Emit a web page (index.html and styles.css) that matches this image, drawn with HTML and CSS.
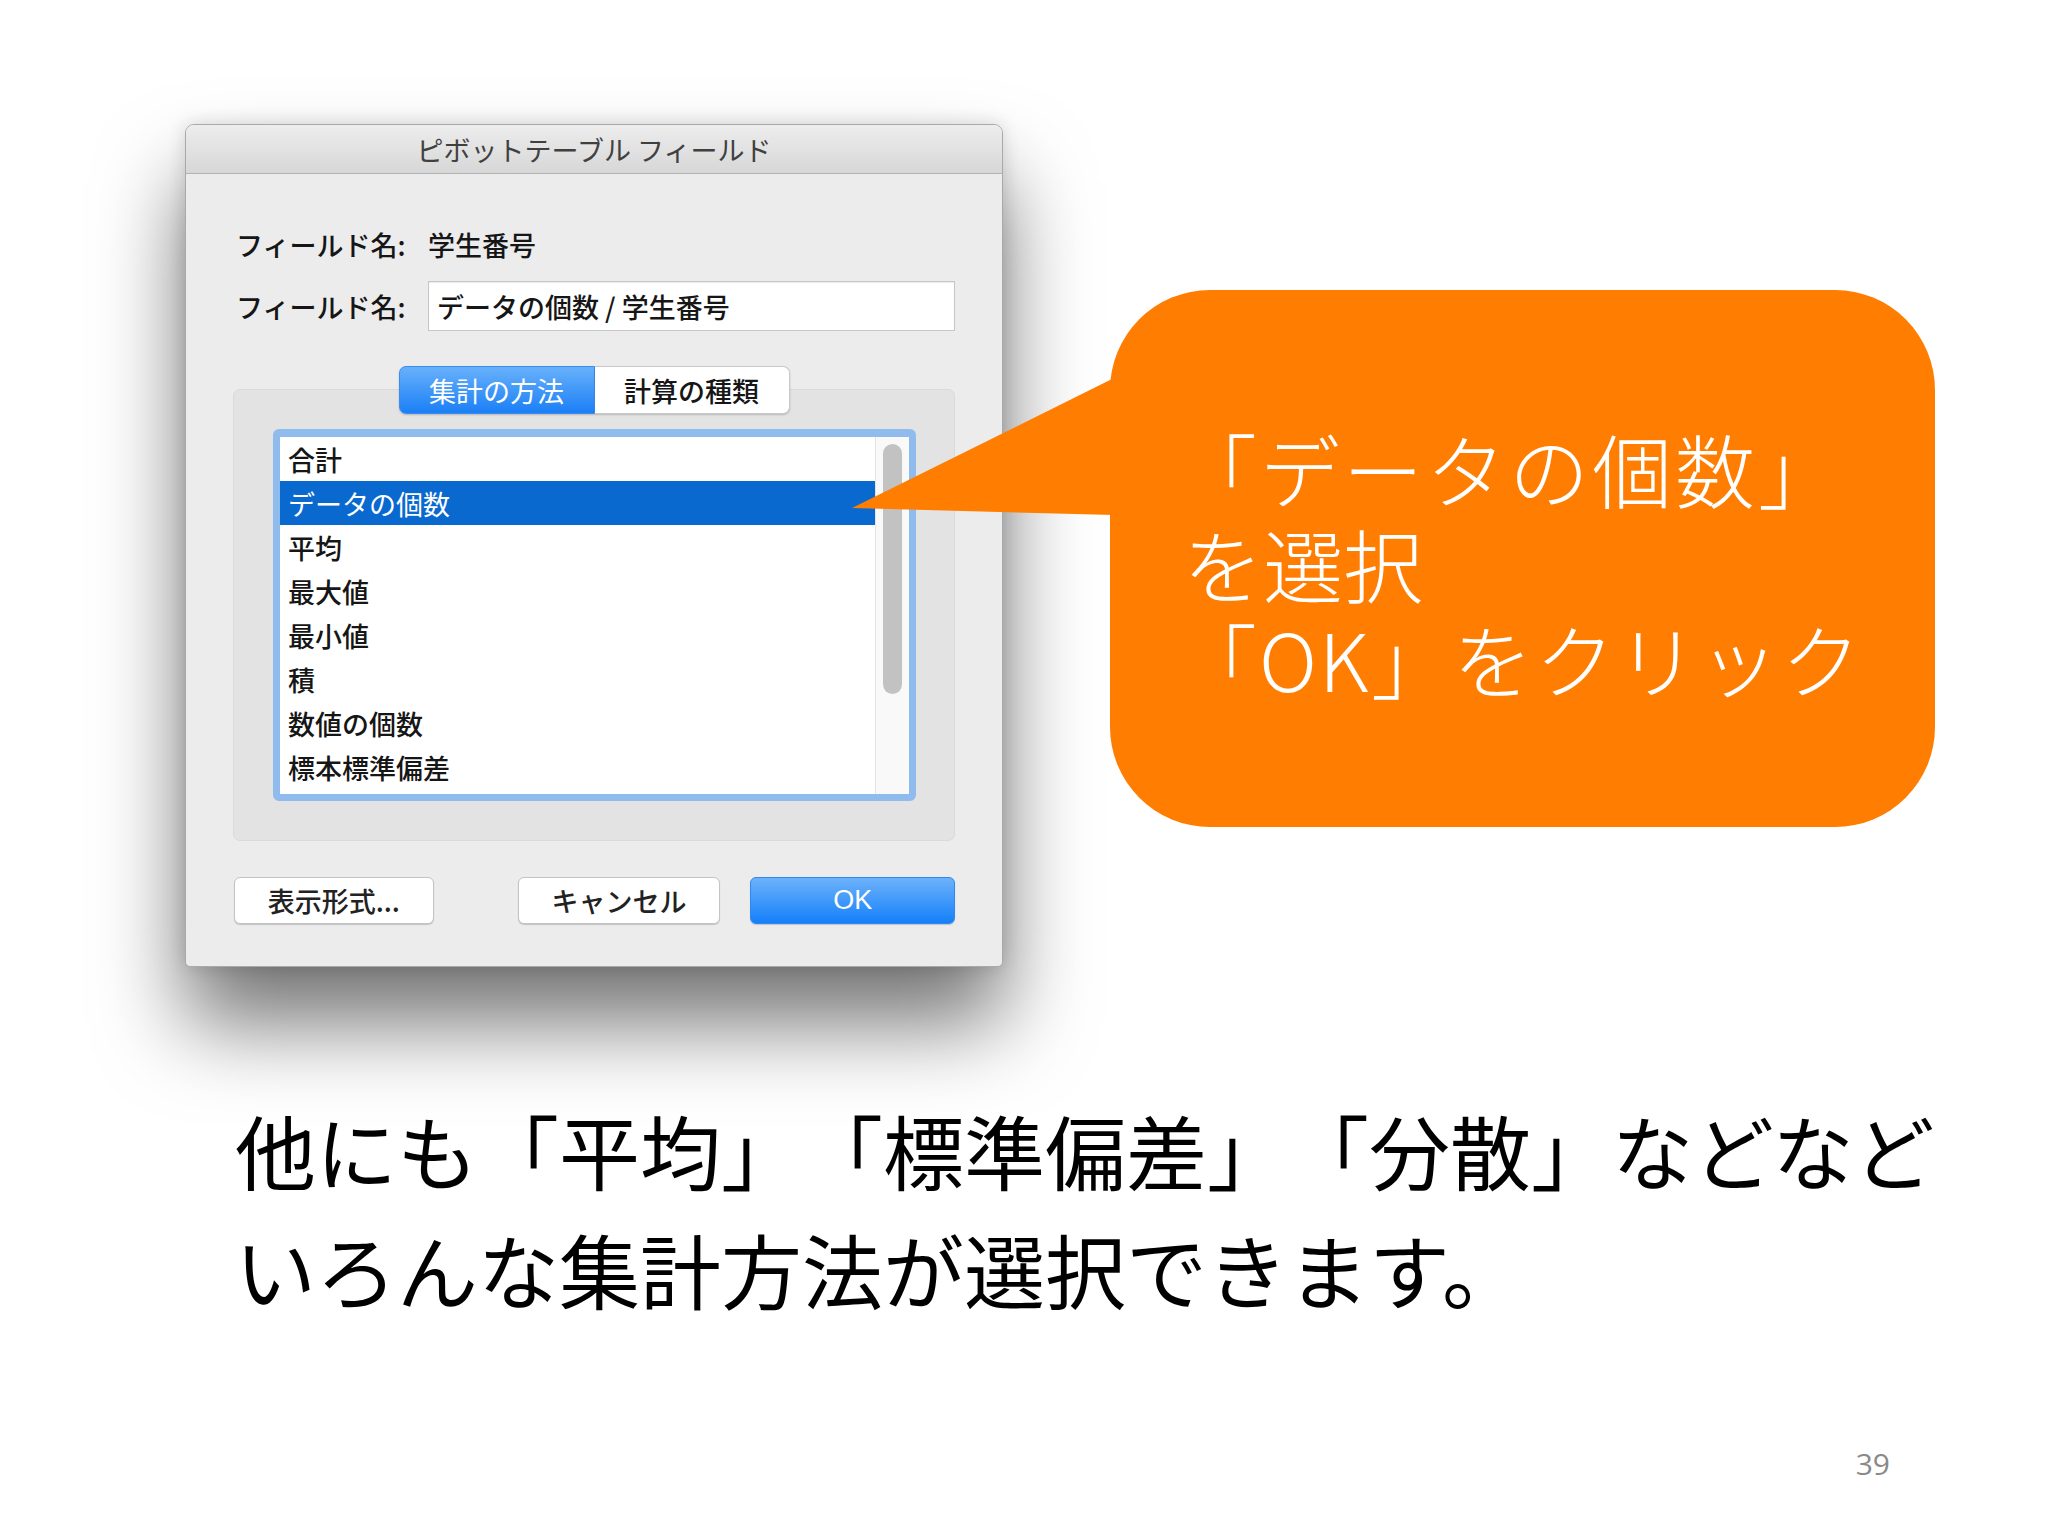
FILE: index.html
```html
<!DOCTYPE html>
<html lang="ja">
<head>
<meta charset="utf-8">
<title>ピボットテーブル フィールド</title>
<link rel="stylesheet" href="styles.css">
</head>
<body>
<div class="slide">
  <div class="top">
    <div class="dialog">
      <div class="titlebar">ピボットテーブル フィールド</div>
      <div class="dbody">
        <div class="field-row">
          <span class="label">フィールド名:</span>
          <span class="value">学生番号</span>
        </div>
        <div class="field-row input-row">
          <span class="label">フィールド名:</span>
          <div class="input">データの個数&nbsp;/&nbsp;学生番号</div>
        </div>
        <div class="tabs">
          <div class="tab active">集計の方法</div>
          <div class="tab">計算の種類</div>
        </div>
        <div class="group">
          <div class="list">
            <div class="items">
              <div class="item">合計</div>
              <div class="item sel">データの個数</div>
              <div class="item">平均</div>
              <div class="item">最大値</div>
              <div class="item">最小値</div>
              <div class="item">積</div>
              <div class="item">数値の個数</div>
              <div class="item">標本標準偏差</div>
            </div>
            <div class="scroll"><div class="thumb"></div></div>
          </div>
        </div>
        <div class="buttons">
          <div class="btn btn-format">表示形式...</div>
          <div class="btn btn-cancel">キャンセル</div>
          <div class="btn btn-ok">OK</div>
        </div>
      </div>
    </div>
    <div class="callout">
      <div class="callout-line hang wide">「データの個数」</div>
      <div class="callout-line">を選択</div>
      <div class="callout-line hang">「OK」をクリック</div>
    </div>
  </div>
  <div class="caption">
    <div>他にも「平均」「標準偏差」「分散」などなど</div>
    <div>いろんな集計方法が選択できます。</div>
  </div>
  <div class="footer">39</div>
</div>
</body>
</html>
```
FILE: styles.css
```css
html, body {
  margin: 0;
  padding: 0;
  background: #ffffff;
}

.slide {
  width: 2048px;
  height: 1536px;
  overflow: hidden;
  display: flex;
  flex-direction: column;
  font-family: "Noto Sans CJK JP", "Noto Sans", sans-serif;
  background: #ffffff;
  text-spacing-trim: space-all;
}

.top {
  display: flex;
  align-items: flex-start;
  padding: 124px 0 0 185px;
}

/* ---------- dialog ---------- */
.dialog {
  width: 818px;
  height: 843px;
  box-sizing: border-box;
  border: 1px solid #a9a9a9;
  border-radius: 9px 9px 5px 5px;
  background: #ececec;
  box-shadow: 0 56px 86px rgba(0, 0, 0, 0.55), 0 0 18px rgba(0, 0, 0, 0.14);
  display: flex;
  flex-direction: column;
  position: relative;
  z-index: 1;
  color: #161616;
  font-size: 27px;
  font-weight: 500;
}

.titlebar {
  height: 49px;
  box-sizing: border-box;
  padding-top: 1px;
  border-bottom: 1px solid #b4b4b4;
  border-radius: 8px 8px 0 0;
  background: linear-gradient(#ededed, #d7d7d7);
  display: flex;
  align-items: center;
  justify-content: center;
  color: #404040;
  font-size: 27px;
  font-weight: 400;
}

.dbody {
  flex: 1;
  display: flex;
  flex-direction: column;
  padding: 52px 47px 0 47px;
}

.field-row {
  display: flex;
  align-items: center;
  height: 36px;
  padding-left: 3px;
}

.field-row.input-row {
  height: 50px;
  margin-top: 19px;
}

.label {
  width: 192px;
  flex: none;
}

.input {
  width: 528px;
  height: 50px;
  box-sizing: border-box;
  border: 1px solid #c6c6c6;
  background: #ffffff;
  padding-left: 8px;
  display: flex;
  align-items: center;
  box-shadow: inset 0 1px 1px rgba(0, 0, 0, 0.08);
}

.tabs {
  align-self: center;
  display: flex;
  margin-top: 35px;
  height: 48px;
  position: relative;
  z-index: 2;
}

.tab {
  width: 195px;
  height: 48px;
  box-sizing: border-box;
  display: flex;
  align-items: center;
  justify-content: center;
  background: #ffffff;
  border: 1px solid #c9c9c9;
  border-left: none;
  border-radius: 0 7px 7px 0;
  box-shadow: 0 1px 2px rgba(0, 0, 0, 0.2);
}

.tab.active {
  width: 196px;
  background: linear-gradient(#68b1fb, #1b7ff6);
  border: 1px solid #3a8cf0;
  border-radius: 7px 0 0 7px;
  color: #ffffff;
  font-weight: 400;
}

.group {
  margin-top: -25px;
  height: 452px;
  box-sizing: border-box;
  background: #e3e3e3;
  border: 1px solid #dadada;
  border-radius: 7px;
  padding: 39px 0 0 39px;
}

.list {
  width: 643px;
  height: 372px;
  box-sizing: border-box;
  border: 7px solid #8fbcec;
  border-top-width: 8px;
  border-radius: 6px;
  background: #ffffff;
  display: flex;
}

.items {
  flex: 1;
}

.item {
  height: 44px;
  padding-left: 8px;
  display: flex;
  align-items: center;
}

.item.sel {
  background: #0a69cf;
  color: #ffffff;
  font-weight: 400;
}

.scroll {
  width: 34px;
  box-sizing: border-box;
  border-left: 1px solid #e4e4e4;
  background: #f9f9f9;
  padding: 7px 0 0 7px;
}

.thumb {
  width: 19px;
  height: 250px;
  border-radius: 10px;
  background: #c2c2c2;
}

.buttons {
  display: flex;
  margin-top: 36px;
  height: 47px;
}

.btn {
  height: 47px;
  box-sizing: border-box;
  display: flex;
  align-items: center;
  justify-content: center;
  background: #ffffff;
  border: 1px solid #c4c4c4;
  border-radius: 6px;
  box-shadow: 0 1px 1px rgba(0, 0, 0, 0.18);
  color: #222222;
}

.btn-format {
  width: 200px;
  margin-left: 1px;
}

.btn-cancel {
  width: 203px;
  margin-left: 84px;
}

.btn-ok {
  width: 205px;
  margin-left: 30px;
  background: linear-gradient(#6cb2fa, #1580fa);
  border-color: #2f87ef;
  color: #ffffff;
  font-weight: 400;
  font-family: "Liberation Sans", "Noto Sans", sans-serif;
}

/* ---------- callout ---------- */
.callout {
  margin-left: 107px;
  margin-top: 166px;
  width: 825px;
  height: 537px;
  box-sizing: border-box;
  border-radius: 100px;
  background: #ff7d00;
  padding: 130px 0 0 73px;
  color: #ffffff;
  font-size: 80px;
  line-height: 95px;
  font-weight: 300;
  white-space: nowrap;
  position: relative;
  z-index: 3;
}

.callout-line.hang {
  margin-left: -6px;
  letter-spacing: 2px;
}

.callout-line.wide {
  letter-spacing: 3px;
}

.callout::before {
  content: "";
  position: absolute;
  left: -258px;
  top: 85px;
  width: 262px;
  height: 142px;
  background: #ff7d00;
  clip-path: polygon(0 133px, 262px 3px, 262px 140px);
}

/* ---------- caption ---------- */
.caption {
  margin-top: 122px;
  padding-left: 235px;
  font-size: 81px;
  line-height: 119px;
  color: #000000;
  white-space: nowrap;
}

.footer {
  margin-top: auto;
  text-align: right;
  padding: 0 158px 52px 0;
  font-family: "Open Sans", "Liberation Sans", sans-serif;
  font-size: 30px;
  color: #8a8a8a;
}
```
